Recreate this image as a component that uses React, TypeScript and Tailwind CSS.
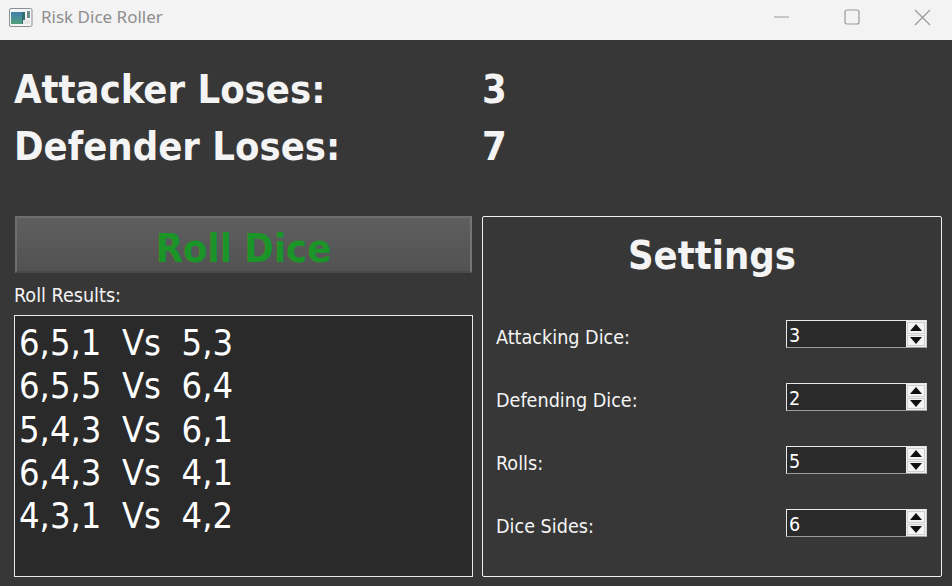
const font = "font-['DejaVu_Sans_Condensed','DejaVu_Sans',sans-serif]";
const bold = "font-bold";

function Spin({ value }: { value: number }) {
  return (
    <div className="flex h-[28px] w-[141px] border border-[#e8e8e8] border-b-[#9a9a9a] border-r-[#cfcfcf] bg-[#2a2a2a]">
      <div className="flex-1 pl-[2px] pt-[2px] text-[19.6px] leading-[26px] text-white">{value}</div>
      <div className="flex w-[20px] flex-col gap-[1px] bg-[#f0f0f0] p-[1px]">
        <div className="flex flex-1 items-center justify-center border border-[#cfcfcf] bg-[#f4f4f4]">
          <svg width="12" height="7" viewBox="0 0 12 7"><path d="M6 0 L12 7 L0 7 Z" fill="#111" /></svg>
        </div>
        <div className="flex flex-1 items-center justify-center border border-[#cfcfcf] bg-[#f4f4f4]">
          <svg width="12" height="7" viewBox="0 0 12 7"><path d="M0 0 L12 0 L6 7 Z" fill="#111" /></svg>
        </div>
      </div>
    </div>
  );
}

function SettingRow({ label, value }: { label: string; value: number }) {
  return (
    <div className="flex h-[28px] items-center justify-between pl-[13px] pr-[14px]">
      <span className="pt-[8px] text-[19.6px] text-[#f4f4f4]">{label}</span>
      <Spin value={value} />
    </div>
  );
}

function Stat({ label, value }: { label: string; value: number }) {
  return (
    <div className={`flex h-[57px] items-center text-[39.6px] text-[#f4f4f4] ${bold}`}>
      <span className="w-[468px]">{label}</span>
      <span>{value}</span>
    </div>
  );
}

export default function App() {
  const rolls = ["6,5,1  Vs  5,3", "6,5,5  Vs  6,4", "5,4,3  Vs  6,1", "6,4,3  Vs  4,1", "4,3,1  Vs  4,2"];
  return (
    <div className={`flex h-[586px] w-[952px] flex-col overflow-hidden bg-[#373737] ${font}`}>
      <div className="flex h-[40px] shrink-0 items-center justify-between bg-[#f3f3f3] pb-[6px]">
        <div className="flex items-center">
          <svg className="ml-[9px]" width="24" height="19" viewBox="0 0 24 19">
            <defs>
              <linearGradient id="g" x1="0" y1="0" x2="0" y2="1">
                <stop offset="0" stopColor="#3f7fb0" />
                <stop offset="1" stopColor="#52a07a" />
              </linearGradient>
            </defs>
            <rect x="0.5" y="0.5" width="22.5" height="18" rx="1.5" fill="#f4f4f4" stroke="#8a9299" />
            <rect x="2" y="4" width="11" height="12" fill="url(#g)" />
            <rect x="13" y="4" width="3" height="12" fill="#2f6f74" />
            <rect x="18" y="3" width="3" height="7" fill="#6c8f88" />
            <rect x="14" y="12" width="7" height="4" fill="#e6e6e6" />
          </svg>
          <span className="ml-[8px] font-['Noto_Sans',sans-serif] text-[17px] text-[#8e8e8e]">Risk Dice Roller</span>
        </div>
        <div className="flex items-center">
          <svg width="16" height="16" viewBox="0 0 16 16" className="mr-[54px]"><path d="M0 8 H15" stroke="#9a9a9a" strokeWidth="1" /></svg>
          <svg width="16" height="16" viewBox="0 0 16 16" className="mr-[54px]"><rect x="1" y="1" width="14" height="14" rx="2" fill="none" stroke="#9a9a9a" strokeWidth="1.2" /></svg>
          <svg width="17" height="17" viewBox="0 0 17 17" className="mr-[21px]"><path d="M1 1 L16 16 M16 1 L1 16" stroke="#9a9a9a" strokeWidth="1.2" /></svg>
        </div>
      </div>

      <div className="flex flex-col pl-[14px] pt-[21px]">
        <Stat label="Attacker Loses:" value={3} />
        <Stat label="Defender Loses:" value={7} />
      </div>

      <div className="mt-[41px] flex gap-[9px] pl-[14px]">
        <div className="flex w-[459px] flex-col">
          <button className={`ml-[1px] flex h-[57px] w-[457px] items-center justify-center border-2 border-t-[#6f6f6f] border-l-[#6f6f6f] border-r-[#757575] border-b-[#4a4a4a] bg-gradient-to-b from-[#5f5f5f] to-[#525252] pt-[9px] text-[39.6px] text-[#1b9527] ${bold}`}>
            Roll Dice
          </button>
          <div className="mt-[12px] h-[22px] text-[19.6px] leading-[22px] text-[#f4f4f4]">Roll Results:</div>
          <div className="mt-[8px] h-[262px] border border-[#e8e8e8] bg-[#2a2a2a] pl-[4px] pt-[5px] text-[36px] leading-[43.25px] whitespace-pre text-white">
            {rolls.map((r) => (
              <div key={r}>{r}</div>
            ))}
          </div>
        </div>
        <div className="h-[361px] w-[460px] rounded-[2px] border border-[#f0f0f0]">
          <div className={`pt-[13px] text-center text-[39.6px] leading-[50px] text-[#f4f4f4] ${bold}`}>Settings</div>
          <div className="mt-[40px] flex flex-col gap-[35px]">
            <SettingRow label="Attacking Dice:" value={3} />
            <SettingRow label="Defending Dice:" value={2} />
            <SettingRow label="Rolls:" value={5} />
            <SettingRow label="Dice Sides:" value={6} />
          </div>
        </div>
      </div>
    </div>
  );
}
